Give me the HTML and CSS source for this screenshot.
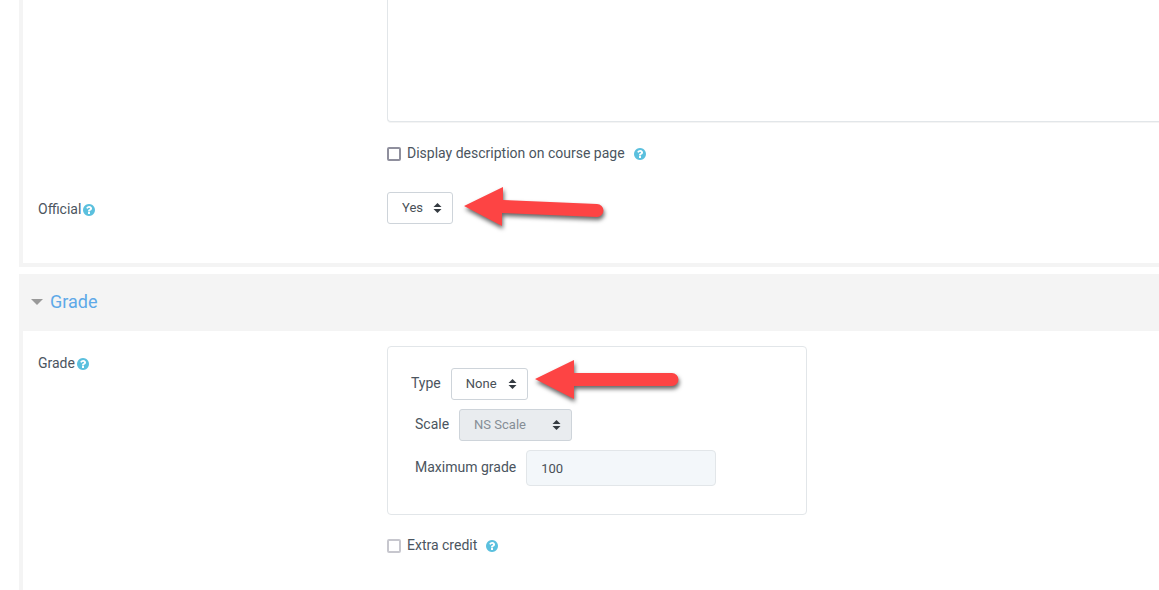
FILE: index.html
```html
<!DOCTYPE html>
<html lang="en">
<head>
  <meta charset="UTF-8">
  <title>Edit activity</title>
  <link rel="stylesheet" href="styles.css">
</head>
<body>

  <svg class="sprite" aria-hidden="true">
    <symbol id="icon-help" viewBox="128 128 1536 1536">
      <path d="M1024 1376v-192q0-14-9-23t-23-9h-192q-14 0-23 9t-9 23v192q0 14 9 23t23 9h192q14 0 23-9t9-23zm256-672q0-88-55.5-163t-138.5-116-170-41q-243 0-371 213-15 24 8 42l132 100q7 6 19 6 16 0 25-12 53-68 86-92 34-24 86-24 48 0 85.5 26t37.500 59q0 38-20 61t-68 45q-63 28-115.500 86.500t-52.500 125.500v36q0 14 9 23t23 9h192q14 0 23-9t9-23q0-19 21.500-49.500t54.500-49.500q32-18 49-28.500t46-35 44.500-48 28-60.500 12.500-81zm384 192q0 209-103 385.500t-279.500 279.500-385.500 103-385.500-103-279.500-279.500-103-385.500 103-385.500 279.500-279.500 385.500-103 385.500 103 279.500 279.500 103 385.500z"/>
    </symbol>
    <symbol id="icon-sort" viewBox="0 0 8 10">
      <path d="M4 0L8 4H0zM0 6h8L4 10z"/>
    </symbol>
  </svg>

  <form class="settings">
    <section class="panel">
      <div class="panel-body general">
        <div class="row">
          <div class="field">
            <textarea class="editor" aria-label="Description"></textarea>
          </div>
        </div>
        <div class="row">
          <div class="field check">
            <input type="checkbox" id="showDescription">
            <label for="showDescription">Display description on course page</label>
            <a href="#" class="help" aria-label="Help with display description"><svg><use href="#icon-help"/></svg></a>
          </div>
        </div>
        <div class="row">
          <div class="name">
            <label for="official">Official</label>
            <a href="#" class="help" aria-label="Help with official"><svg><use href="#icon-help"/></svg></a>
          </div>
          <div class="field">
            <div class="select select-yes">
              <select id="official"><option>Yes</option><option>No</option></select>
              <svg class="sort"><use href="#icon-sort"/></svg>
              <svg class="arrow" viewBox="0 0 150 48">
                <path d="M1 20L40 1V14L134 18A6 6 0 0 1 134 31L39 27V40z"/>
              </svg>
            </div>
          </div>
        </div>
      </div>
    </section>

    <section class="panel panel-last">
      <h3 class="panel-title"><a href="#"><span class="caret"></span>Grade</a></h3>
      <div class="panel-body">
        <div class="row">
          <div class="name">
            <label for="gradeType">Grade</label>
            <a href="#" class="help" aria-label="Help with grade"><svg><use href="#icon-help"/></svg></a>
          </div>
          <div class="field grade-box">
            <div class="line line-type">
              <label for="gradeType">Type</label>
              <div class="select select-type">
                <select id="gradeType"><option>None</option><option>Scale</option><option>Point</option></select>
                <svg class="sort"><use href="#icon-sort"/></svg>
                <svg class="arrow" viewBox="0 0 150 48">
                  <path d="M2 20L41 1V14H139A6 6 0 0 1 139 27H41V40z"/>
                </svg>
              </div>
            </div>
            <div class="line">
              <label for="scale">Scale</label>
              <div class="select select-scale">
                <select id="scale" disabled><option>NS Scale</option></select>
                <svg class="sort"><use href="#icon-sort"/></svg>
              </div>
            </div>
            <div class="line">
              <label for="maxGrade">Maximum grade</label>
              <input type="text" id="maxGrade" value="100" disabled>
            </div>
          </div>
        </div>
        <div class="row">
          <div class="field check check-extra">
            <input type="checkbox" id="extraCredit" disabled>
            <label for="extraCredit">Extra credit</label>
            <a href="#" class="help" aria-label="Help with extra credit"><svg><use href="#icon-help"/></svg></a>
          </div>
        </div>
      </div>
    </section>
  </form>

</body>
</html>
```
FILE: styles.css
```css
* {
  box-sizing: border-box;
}
body {
  margin: 0;
  background: #fff;
  color: #4b5560;
  font-family: Roboto, "Liberation Sans", sans-serif;
  font-size: 14px;
  line-height: 20px;
}
.sprite {
  display: none;
}
.settings {
  display: flex;
  flex-direction: column;
  gap: 7px;
  min-height: 100vh;
  padding-left: 19px;
}
.panel {
  border: 4px solid #f4f4f4;
  border-width: 0 0 4px 4px;
}
.panel-last {
  flex: 1;
  border-bottom: 0;
}
.panel-title {
  margin: 0 0 0 -4px;
  padding: 16px 12px 17px;
  background: #f4f4f4;
  font-size: 18px;
  font-weight: 400;
  line-height: 24px;
}
.panel-title a {
  display: flex;
  align-items: center;
  gap: 7px;
  color: #5ea9e8;
  text-decoration: none;
}
.caret {
  border: 6px solid transparent;
  border-top-color: #999;
  border-bottom: 0;
}
.panel-body {
  padding: 15px 0 15px 15px;
}
.general {
  padding-top: 0;
  padding-bottom: 37px;
}
.row {
  display: grid;
  grid-template-columns: 349px 1fr;
}
.field {
  grid-column: 2;
}
.name {
  display: flex;
  align-items: center;
  gap: 2px;
  height: 34px;
}
.help {
  display: flex;
  padding-top: 2px;
}
.help svg {
  width: 12px;
  height: 12px;
  fill: #5bc0de;
}
.editor {
  display: block;
  width: 100%;
  height: 122px;
  border: 1px solid #e2e6e9;
  border-width: 0 0 1px 1px;
  border-radius: 0 0 0 4px;
  box-shadow: 0 1px 0 #f4f4f4;
  resize: none;
}
.check {
  display: flex;
  align-items: center;
  padding: 21px 0 29px;
}
.check-extra {
  padding-bottom: 21px;
  padding-top: 20px;
}
.check label {
  margin: 0 9px 0 6px;
}
input[type="checkbox"] {
  appearance: none;
  width: 14px;
  height: 14px;
  margin: 2px 0 0;
  border: 2px solid #8f8f9d;
  border-radius: 2px;
  background: #fff;
}
input[type="checkbox"]:disabled {
  border-color: #c7c7ce;
}
input[type="checkbox"]:checked {
  background: #5ea9e8;
}
.select {
  position: relative;
  height: 32px;
}
select {
  appearance: none;
  width: 100%;
  height: 100%;
  padding: 0 14px;
  border: 1px solid #ced4da;
  border-radius: 3px;
  background: #fff;
  color: #495057;
  font: inherit;
  font-size: 13px;
}
select:disabled {
  background: #e9ecef;
  color: #868e96;
  opacity: 1;
}
.sort {
  position: absolute;
  top: 11px;
  right: 11px;
  width: 9px;
  height: 10px;
  fill: #343a40;
  pointer-events: none;
}
.select-yes {
  width: 66px;
}
.select-type {
  width: 77px;
}
.select-scale {
  width: 113px;
}
.arrow {
  position: absolute;
  top: -6px;
  left: calc(100% + 10px);
  width: 150px;
  height: 48px;
  overflow: visible;
  fill: #fd4444;
  filter: drop-shadow(1px 3px 2px rgba(0, 0, 0, 0.6));
  pointer-events: none;
}
.select-type .arrow {
  top: -9px;
  left: calc(100% + 5px);
}
.grade-box {
  display: flex;
  flex-direction: column;
  gap: 9px;
  max-width: 420px;
  padding: 21px 27px 28px;
  border: 1px solid #e2e6e9;
  border-radius: 4px;
}
.line {
  display: flex;
  align-items: center;
  gap: 10px;
}
.line-type {
  margin-left: -4px;
}
.line label {
  padding-bottom: 2px;
}
.grade-box input {
  width: 190px;
  height: 36px;
  padding: 0 14px;
  border: 1px solid #e2e6e9;
  border-radius: 4px;
  background: #f3f7fa;
  color: #495057;
  font: inherit;
  font-size: 13px;
}
```
